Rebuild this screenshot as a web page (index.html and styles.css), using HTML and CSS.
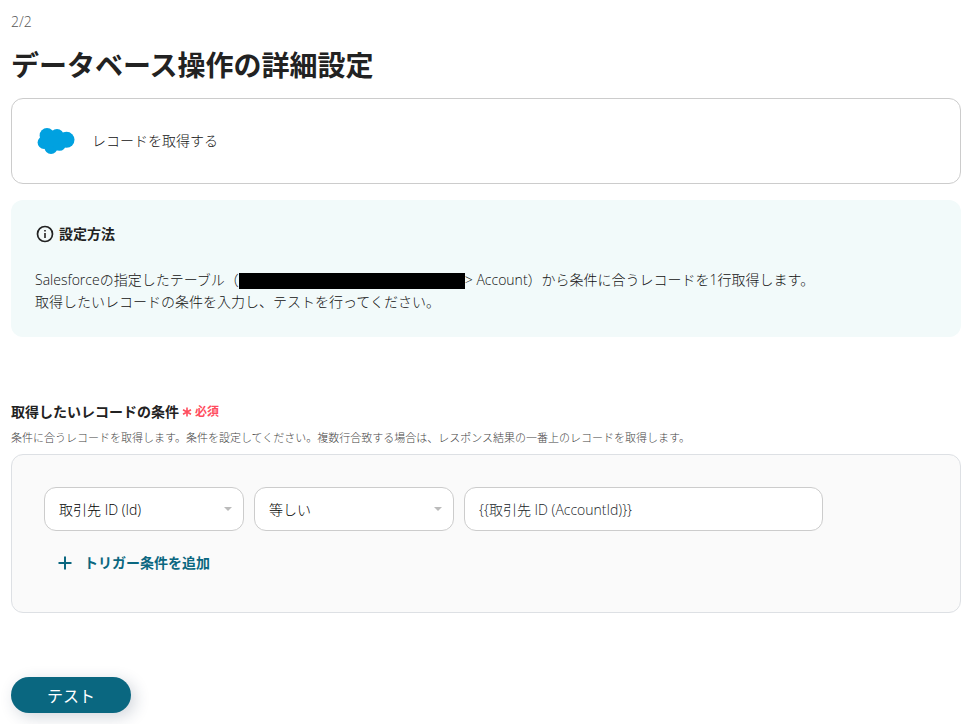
FILE: index.html
```html
<!DOCTYPE html>
<html lang="ja">
<head>
  <meta charset="UTF-8" />
  <meta name="viewport" content="width=device-width, initial-scale=1.0" />
  <title>データベース操作の詳細設定</title>
  <link rel="stylesheet" href="styles.css">
</head>
<body>
  <main class="page">
    <p class="step">2/2</p>
    <h1>データベース操作の詳細設定</h1>

    <div class="card">
      <svg class="logo" viewBox="0 0 38 28" aria-hidden="true">
        <g fill="#00a1e0">
          <circle cx="10" cy="8.5" r="7.4" />
          <circle cx="20" cy="8.8" r="6.8" />
          <circle cx="29.5" cy="12.8" r="8" />
          <circle cx="7" cy="15.5" r="6.4" />
          <circle cx="14" cy="20.3" r="6.6" />
          <circle cx="22.5" cy="17.4" r="6.4" />
          <circle cx="16" cy="14" r="6" />
        </g>
      </svg>
      <span>レコードを取得する</span>
    </div>

    <section class="info">
      <h2>
        <svg class="info-icon" viewBox="0 0 18 18" aria-hidden="true">
          <circle cx="9" cy="9" r="7.5" fill="none" stroke="#222" stroke-width="1.7" />
          <path d="M9 8v5M9 5v1.6" stroke="#222" stroke-width="1.6" />
        </svg>
        設定方法
      </h2>
      <p>Salesforceの指定したテーブル（<span class="masked"></span>&gt; Account）から条件に合うレコードを1行取得します。<br>取得したいレコードの条件を入力し、テストを行ってください。</p>
    </section>

    <form>
      <!-- Record conditions -->
      <div class="label-row">
        <label for="field">取得したいレコードの条件</label>
        <span class="required">
          <svg viewBox="0 0 10 10" aria-hidden="true">
            <path d="M5 .5v9M1 2.7l8 4.6M9 2.7L1 7.3" stroke="#ff4d5e" stroke-width="1.6" />
          </svg>
          必須
        </span>
      </div>
      <p class="hint">条件に合うレコードを取得します。条件を設定してください。複数行合致する場合は、レスポンス結果の一番上のレコードを取得します。</p>

      <div class="conditions">
        <div class="condition-row">
          <div class="select">
            <select id="field">
              <option>取引先 ID (Id)</option>
            </select>
          </div>
          <div class="select">
            <select aria-label="演算子">
              <option>等しい</option>
            </select>
          </div>
          <input class="value" type="text" value="{{取引先 ID (AccountId)}}" aria-label="値">
        </div>
        <button class="add-btn" type="button">
          <svg viewBox="0 0 14 14" aria-hidden="true">
            <path d="M7 .5v13M.5 7h13" stroke="#0a6780" stroke-width="2" />
          </svg>
          トリガー条件を追加
        </button>
      </div>

      <button class="btn" type="button">テスト</button>
    </form>
  </main>
</body>
</html>
```
FILE: styles.css
```css
* {
  box-sizing: border-box;
}
body {
  margin: 0;
  background-color: #fff;
  color: #111;
  font-family: "Open Sans", "Noto Sans CJK JP", sans-serif;
  font-size: 14px;
  font-weight: 300;
  line-height: 22px;
}
h1, h2, p {
  margin: 0;
}
h1, h2, label {
  color: #222;
}
select, input, button {
  font-family: inherit;
  font-size: 14px;
  font-weight: inherit;
}
.page {
  padding: 11px 16px 11px 11px;
}
.step {
  color: #555;
}
h1 {
  margin: 12px 0;
  font-size: 28px;
  line-height: 41px;
}
.card {
  display: flex;
  align-items: center;
  gap: 17px;
  height: 86px;
  padding: 0 25px;
  border: 1px solid #ccc;
  border-radius: 12px;
}
.logo {
  width: 38px;
  height: 28px;
}
.info {
  margin-top: 16px;
  padding: 23px 24px 24px;
  border-radius: 12px;
  background-color: #f2fafa;
}
.info h2 {
  display: flex;
  align-items: center;
  gap: 5px;
  margin-bottom: 24px;
  font-size: 14px;
  line-height: 22px;
}
.info-icon {
  width: 18px;
  height: 18px;
  margin-left: 1px;
}
.masked {
  display: inline-block;
  width: 226px;
  height: 16px;
  background-color: #000;
  vertical-align: middle;
}
.label-row {
  display: flex;
  align-items: center;
  gap: 3px;
  margin-top: 64px;
  font-weight: bold;
}
.required {
  display: flex;
  align-items: center;
  gap: 3px;
  color: #ff4d5e;
  font-size: 12px;
}
.required svg {
  width: 10px;
  height: 10px;
}
.hint {
  margin: 5px 0 6px;
  color: #444;
  font-size: 11px;
  line-height: 20px;
}
.conditions {
  padding: 32px;
  border: 1px solid #dde0e4;
  border-radius: 12px;
  background-color: #fafafa;
}
.condition-row {
  display: flex;
  gap: 10px;
}
.select {
  position: relative;
  width: 200px;
}
.select::after {
  content: "";
  position: absolute;
  top: 20px;
  right: 12px;
  border: 4px solid transparent;
  border-top-color: #bbb;
  pointer-events: none;
}
.select select, .value {
  width: 100%;
  height: 44px;
  padding: 0 14px;
  border: 1px solid #ccc;
  border-radius: 12px;
  background-color: #fff;
  color: #000;
}
.select select {
  appearance: none;
}
.condition-row .value {
  width: 359px;
  color: #212529;
}
.add-btn {
  display: flex;
  align-items: center;
  gap: 12px;
  margin: 16px 0 1px;
  padding: 4px 14px;
  border: none;
  background: none;
  color: #0a6780;
  font-weight: bold;
  line-height: 24px;
  cursor: pointer;
}
.add-btn svg {
  width: 14px;
  height: 14px;
}
.btn {
  display: block;
  width: 120px;
  height: 36px;
  margin-top: 64px;
  border: none;
  border-radius: 18px;
  background-color: #0a6780;
  color: #fff;
  font-size: 16px;
  font-weight: normal;
  box-shadow: 4px 4px 16px rgba(30, 50, 80, 0.2);
  cursor: pointer;
}
```
